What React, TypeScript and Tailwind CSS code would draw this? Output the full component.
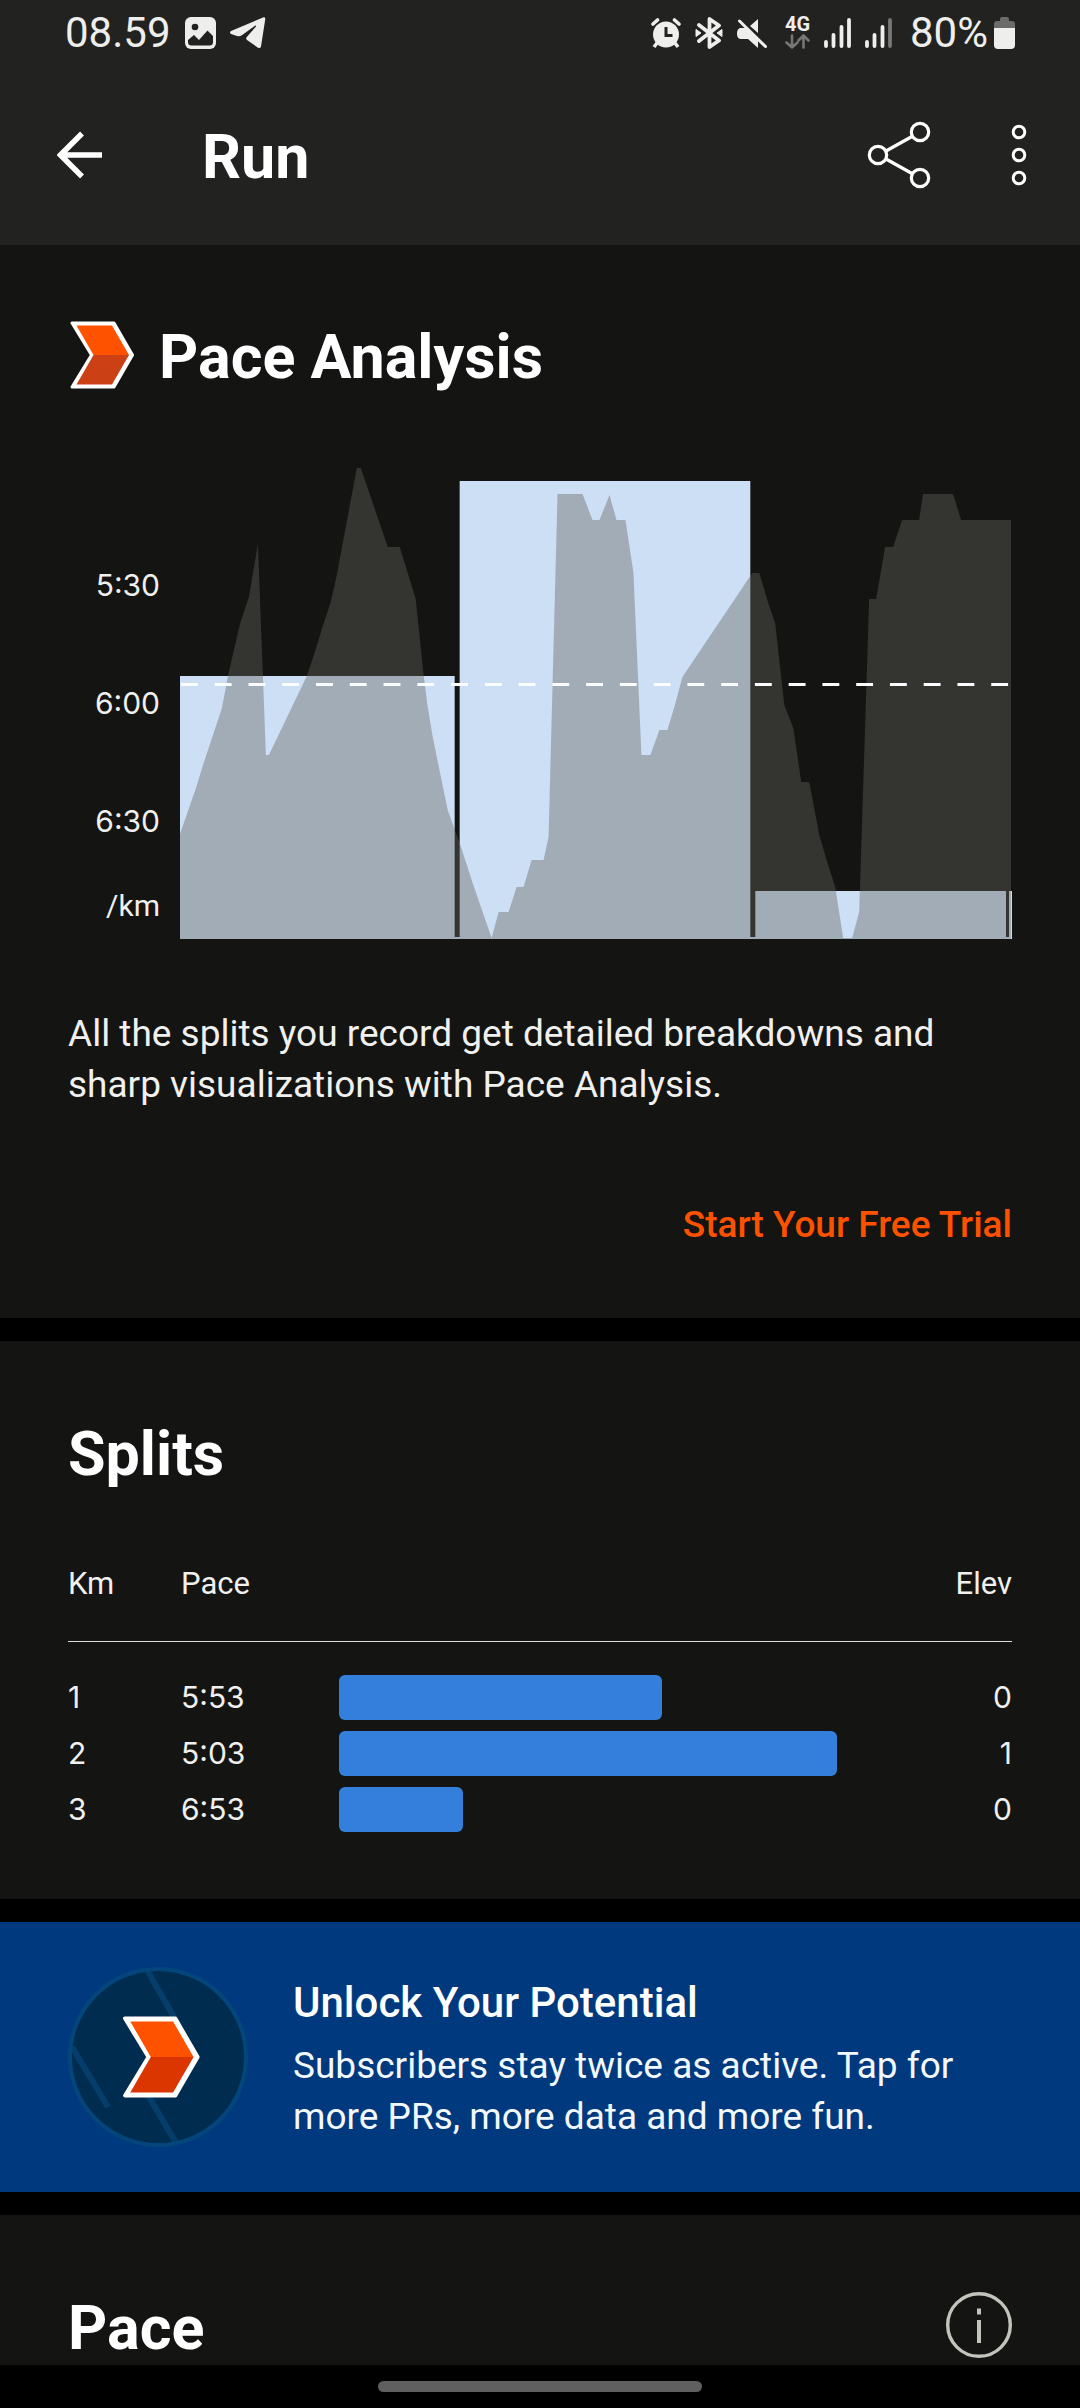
import React from "react";

const splits = [
  { km: 1, pace: "5:53", bar: 64.9, elev: 0 },
  { km: 2, pace: "5:03", bar: 100, elev: 1 },
  { km: 3, pace: "6:53", bar: 24.9, elev: 0 },
];

const elevation =
  "0,472 0,367 16,321 24,295 32,271 42,241 48,209 60,157 69,130 78,77 86,288 89,288 127,209 135,185 143,159 151,135 157,108 177,1 181,1 208,80 220,80 236,132 244,209 248,240 253,270 268,343 280,376 293,416 312,471 319,445 329,445 337,420 344,420 352,393 364,393 369,370 378,27 403,27 413,53 420,53 430,28 437,53 446,53 454,106 462,288 471,288 480,263 488,263 495,240 503,210 573,106 580,106 588,133 596,157 605,238 614,261 622,315 630,315 640,368 648,395 656,420 664,471 673,471 680,445 690,132 697,132 706,80 714,80 723,53 740,53 744,27 774,27 782,53 832,53 832,472";

function StatusBar() {
  return (
    <div className="flex h-[65px] items-center justify-between pl-[65px] pr-[65px] text-[42px] leading-none text-[#eeeeec]">
      <div className="flex items-center gap-3.5">
        <span>08.59</span>
        <svg width="31" height="32" viewBox="0 0 31 32" aria-hidden="true">
          <rect width="31" height="32" rx="6" fill="#eeeeec" />
          <circle cx="10" cy="10" r="3.3" fill="#222220" />
          <path d="M3 23 9 18l5 5 8.500-9.500L28 19v6a3.500 3.500 0 0 1-3.500 3.500h-18A3.500 3.500 0 0 1 3 25Z" fill="#222220" />
        </svg>
        <svg width="36" height="33" viewBox="0 0 36 33" aria-hidden="true">
          <path
            d="M1 15 33 1.500q2.600-.8 2.200 2L31 30.500q-.8 2.300-3 1.200L17 24q-1.600-1.300-.2-3L26 10.500q.3-1.200-1-.8L11.500 19.500Q9.500 20.800 7 20L1 18q-2-1.300 0-3Z"
            fill="#eeeeec"
          />
        </svg>
      </div>
      <div className="flex items-center gap-3.5">
        <svg width="30" height="32" viewBox="0 0 30 32" aria-hidden="true">
          <path d="m2 7 4.500-4M28 7l-4.500-4" stroke="#eeeeec" strokeWidth="3.600" strokeLinecap="round" />
          <path d="m6 26-3 4M24 26l3 4" stroke="#eeeeec" strokeWidth="3.500" />
          <circle cx="15" cy="17.500" r="13" fill="#eeeeec" />
          <path d="M15 10v8.500h6.500" fill="none" stroke="#222220" strokeWidth="3" />
        </svg>
        <svg width="28" height="32" viewBox="0 0 28 32" aria-hidden="true">
          <path d="m4 8 20 15.500-9.500 6.500V2L24 8.500 4 24" fill="none" stroke="#eeeeec" strokeWidth="3.800" strokeLinecap="round" strokeLinejoin="round" />
          <path d="M1 12.500 6 16l-5 3.500ZM27 12.500 22 16l5 3.500Z" fill="#eeeeec" stroke="#eeeeec" strokeLinejoin="round" />
        </svg>
        <svg width="30" height="32" viewBox="0 0 30 32" aria-hidden="true">
          <path d="M21 2v14L13 9ZM3 11h6l12 12v8L11 22H3q-3-1-3-5.500T3 11Z" fill="#eeeeec" />
          <path d="m2.500 4 26 25.500" stroke="#eeeeec" strokeWidth="3" strokeLinecap="round" />
        </svg>
        <div className="flex flex-col items-center gap-0.5 pl-1">
          <span className="text-[20px] font-bold leading-4">4G</span>
          <svg width="25" height="15" viewBox="0 0 25 15" fill="none" stroke="#777775" strokeWidth="2.600" strokeLinecap="round" strokeLinejoin="round" aria-hidden="true">
            <path d="M7 1.500v12M1.500 8.500l5.500 5 5.500-5M18.500 13.500v-12M13.500 6.500l5-5 5 5" />
          </svg>
        </div>
        <svg width="27" height="30" viewBox="0 0 27 30" stroke="#eeeeec" strokeWidth="3.800" strokeLinecap="round" aria-label="Signal 4 of 4">
          <path d="M2 24v4M9.500 17v11M17.500 9v19M25 2v26" />
        </svg>
        <svg width="27" height="30" viewBox="0 0 27 30" stroke="#eeeeec" strokeWidth="3.800" strokeLinecap="round" aria-label="Signal 3 of 4">
          <path d="M2 24v4M9.500 17v11M17.500 9v19" />
          <path d="M25 2v26" stroke="#777775" />
        </svg>
        <div className="flex items-center gap-1.5 pl-1">
          <span>80%</span>
          <svg width="21" height="32" viewBox="0 0 21 32" aria-hidden="true">
            <path d="M6 4V2q0-2 2-2h5q2 0 2 2v2h3q3 0 3 3v5H0V7q0-3 3-3Z" fill="#6b6b69" />
            <path d="M0 11h21v17q0 4-4 4H4q-4 0-4-4Z" fill="#eeeeec" />
          </svg>
        </div>
      </div>
    </div>
  );
}

function Chevron({ className, lower }: { className: string; lower: string }) {
  return (
    <svg viewBox="0 0 64 68" className={className} aria-hidden="true">
      <path d="M2 2h42l18.500 32L44 66H2l19.500-32Z" fill="#fff" stroke="#fff" strokeWidth="3" strokeLinejoin="round" />
      <path d="M6.500 4.500h35.500L59 34H23.500Z" fill="#ff5200" />
      <path d="M23.500 34H59L42 63.500H6.500Z" fill={lower} />
    </svg>
  );
}

function PaceChart() {
  return (
    <div className="mt-[78px] flex gap-5">
      <div className="w-[92px] shrink-0 pt-[59px] text-right font-['Inter',sans-serif] text-[30px] text-[#f0f0ee]">
        <div className="leading-[118px]">5:30</div>
        <div className="leading-[118px]">6:00</div>
        <div className="leading-[118px]">6:30</div>
        <div className="font-['Roboto',sans-serif] leading-[52px]">/km</div>
      </div>
      <svg viewBox="0 0 833 472" preserveAspectRatio="none" className="h-[472px] min-w-0 flex-1" role="img" aria-label="Pace per kilometre">
        <g fill="#cddff5">
          <rect y="209" width="275" height="263" />
          <rect x="280" y="14" width="291" height="458" />
          <rect x="576" y="424" width="251" height="48" />
          <rect x="830" y="424" width="3" height="48" />
          <rect y="470" width="833" height="2" />
        </g>
        <polygon points={elevation} fill="#63635d" fillOpacity="0.41" />
        <path d="M1 217.500h831" stroke="#fbfdff" strokeWidth="3" strokeDasharray="16.900" />
      </svg>
    </div>
  );
}

export default function App() {
  return (
    <div className="min-h-screen bg-black font-['Roboto',sans-serif] text-white">
      <header className="bg-[#222220]">
        <StatusBar />
        <div className="flex h-[180px] items-center pl-[57px] pr-[53px]">
          <button type="button" aria-label="Back">
            <svg width="46" height="48" viewBox="0 0 46 48" fill="none" stroke="#fff" strokeWidth="5.500" aria-hidden="true">
              <path d="M45 24H4M25 2.500 3.500 24 25 45.500" />
            </svg>
          </button>
          <h1 className="ml-[99px] flex-1 pt-1 text-[61px] font-bold leading-[72px]">Run</h1>
          <button type="button" aria-label="Share" className="mr-20">
            <svg width="64" height="68" viewBox="0 0 64 68" fill="none" stroke="#fff" strokeWidth="3.200" aria-hidden="true">
              <circle cx="11" cy="34" r="8.700" />
              <circle cx="53" cy="11" r="8.700" />
              <circle cx="53" cy="57" r="8.700" />
              <path d="m19 30 26-14.500M19 38l26 14.500" />
            </svg>
          </button>
          <button type="button" aria-label="More options">
            <svg width="16" height="62" viewBox="0 0 16 62" fill="none" stroke="#fff" strokeWidth="3" aria-hidden="true">
              <circle cx="8" cy="8" r="5.800" />
              <circle cx="8" cy="31" r="5.800" />
              <circle cx="8" cy="54" r="5.800" />
            </svg>
          </button>
        </div>
      </header>

      <main className="flex flex-col gap-[23px]">
        <section className="bg-[#141412] px-[68px] pb-[69px] pt-[76px]">
          <div className="flex items-end gap-[25px]">
            <Chevron className="ml-0.5 h-[68px] w-16" lower="#cc4016" />
            <h2 className="text-[61px] font-bold leading-[64px]">Pace Analysis</h2>
          </div>
          <PaceChart />
          <p className="mt-[69px] text-[37px] leading-[51px] text-[#f0f0ee]">
            All the splits you record get detailed breakdowns and sharp visualizations with Pace Analysis.
          </p>
          <div className="mt-[91px] flex justify-end">
            <a href="#trial" className="text-[37px] font-medium leading-[48px] text-[#fc5200]">
              Start Your Free Trial
            </a>
          </div>
        </section>

        <section className="bg-[#141412] px-[68px] pb-[62px] pt-[77px]">
          <h2 className="text-[61px] font-bold leading-[72px]">Splits</h2>
          <table className="mt-9 w-full table-fixed font-['Inter',sans-serif] text-[30px] leading-[45px] text-[#f0f0ee]">
            <thead className="font-['Roboto',sans-serif] text-[31px]">
              <tr className="h-[115px] border-b border-[#dededa] text-left">
                <th className="w-[113px] font-normal">Km</th>
                <th className="w-[158px] font-normal">Pace</th>
                <th aria-label="Pace bar" />
                <th className="w-[175px] text-right font-normal">Elev</th>
              </tr>
            </thead>
            <tbody>
              <tr className="h-7" aria-hidden="true" />
              {splits.map((s) => (
                <tr key={s.km} className="h-14">
                  <td>{s.km}</td>
                  <td>{s.pace}</td>
                  <td>
                    <div className="h-[45px] rounded-md bg-[#337fdb]" style={{ width: `${s.bar}%` }} />
                  </td>
                  <td className="text-right">{s.elev}</td>
                </tr>
              ))}
            </tbody>
          </table>
        </section>

        <a href="#subscribe" className="flex gap-[45px] bg-[#00397d] px-[68px] py-[45px]">
          <svg viewBox="0 0 180 180" className="size-[180px] shrink-0" aria-hidden="true">
            <circle cx="90" cy="90" r="88" fill="#002d4f" />
            <path d="m79 3 31 54M80 128l28 48M4 80l36 60" stroke="#053e6b" strokeWidth="6" />
            <circle cx="90" cy="90" r="88" fill="none" stroke="#04467c" strokeWidth="4" />
            <svg x="54" y="49" width="78" height="82" viewBox="0 0 64 68">
              <path d="M2 2h42l18.500 32L44 66H2l19.500-32Z" fill="#fff" stroke="#fff" strokeWidth="3" strokeLinejoin="round" />
              <path d="M6.500 4.500h35.500L59 34H23.500Z" fill="#ff5200" />
              <path d="M23.500 34H59L42 63.500H6.500Z" fill="#db3500" />
            </svg>
          </svg>
          <div className="pt-2.5 text-[37px] leading-[51px]">
            <h3 className="text-[42px] font-medium leading-[51px]">Unlock Your Potential</h3>
            <p className="mt-3 text-[#f3f8fd]">
              Subscribers stay twice as active. Tap for more PRs, more data and more fun.
            </p>
          </div>
        </a>

        <section className="flex items-start justify-between bg-[#141412] px-[68px] pb-px pt-[77px]">
          <h2 className="text-[61px] font-bold leading-[72px]">Pace</h2>
          <button type="button" aria-label="About pace">
            <svg width="66" height="66" viewBox="0 0 66 66" fill="none" stroke="#c4c4bd" aria-hidden="true">
              <circle cx="33" cy="33" r="31.300" strokeWidth="3.400" />
              <path d="M33 16.500v6M33 28v23" strokeWidth="4" />
            </svg>
          </button>
        </section>
      </main>

      <footer className="flex h-[42px] justify-center bg-black pt-4">
        <div className="h-[11px] w-[30%] rounded-full bg-[#5f5f5f]" />
      </footer>
    </div>
  );
}
